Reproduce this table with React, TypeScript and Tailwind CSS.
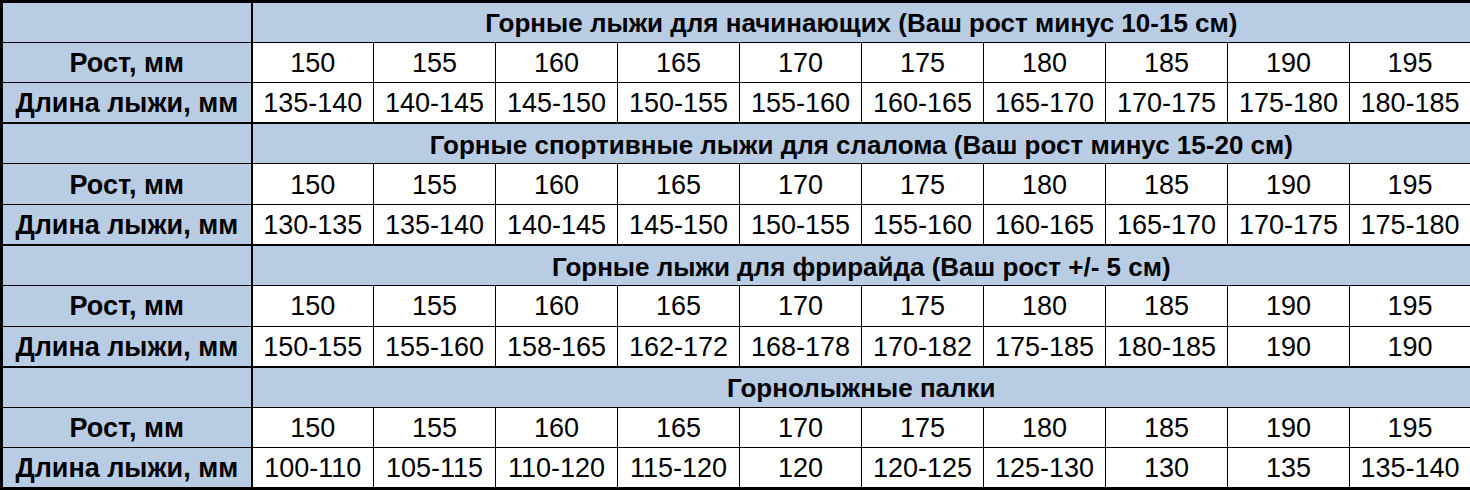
import { Fragment } from 'react';

const sections = [
  {
    title: 'Горные лыжи для начинающих (Ваш рост минус 10-15 см)',
    lengths: ['135-140', '140-145', '145-150', '150-155', '155-160', '160-165', '165-170', '170-175', '175-180', '180-185'],
  },
  {
    title: 'Горные спортивные лыжи для слалома (Ваш рост минус 15-20 см)',
    lengths: ['130-135', '135-140', '140-145', '145-150', '150-155', '155-160', '160-165', '165-170', '170-175', '175-180'],
  },
  {
    title: 'Горные лыжи для фрирайда (Ваш рост +/- 5 см)',
    lengths: ['150-155', '155-160', '158-165', '162-172', '168-178', '170-182', '175-185', '180-185', '190', '190'],
  },
  {
    title: 'Горнолыжные палки',
    lengths: ['100-110', '105-115', '110-120', '115-120', '120', '120-125', '125-130', '130', '135', '135-140'],
  },
];

const heights = ['150', '155', '160', '165', '170', '175', '180', '185', '190', '195'];

const labelCell = 'bg-[#b8cce4] border border-black border-r-2 font-bold text-center p-0 pt-[2px] text-[27px]';
const dataCell = 'bg-white border border-black text-center p-0 pt-[2px] text-[27px]';

export default function App() {
  return (
    <div className="w-[1470px] h-[490px] overflow-hidden bg-white font-['Liberation_Sans',Arial,sans-serif] text-black">
      <table className="w-[1470px] h-[490px] border-collapse table-fixed border-[3px] border-black text-[26px] leading-none">
        <colgroup>
          <col className="w-[250px]" />
          {heights.map((h) => (
            <col key={h} className="w-[122px]" />
          ))}
        </colgroup>
        <tbody>
          {sections.map((s, i) => (
            <Fragment key={i}>
              <tr className="h-[38px]">
                <td className={`${labelCell} ${i > 0 ? 'border-t-2' : 'border-t-[3px]'}`} />
                <td
                  colSpan={10}
                  className={`bg-[#b8cce4] border border-black font-bold text-center p-0 pt-[2px] ${i > 0 ? 'border-t-2' : 'border-t-[3px]'}`}
                >
                  {s.title}
                </td>
              </tr>
              <tr className="h-[38px]">
                <td className={labelCell}>Рост, мм</td>
                {heights.map((h) => (
                  <td key={h} className={dataCell}>
                    {h}
                  </td>
                ))}
              </tr>
              <tr className="h-[38px]">
                <td className={labelCell}>Длина лыжи, мм</td>
                {s.lengths.map((l, j) => (
                  <td key={j} className={dataCell}>
                    {l}
                  </td>
                ))}
              </tr>
            </Fragment>
          ))}
        </tbody>
      </table>
    </div>
  );
}
